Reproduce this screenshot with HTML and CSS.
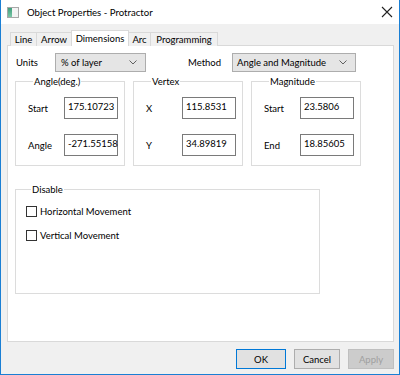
FILE: index.html
```html
<!DOCTYPE html>
<html>
<head>
<meta charset="utf-8">
<link rel="stylesheet" href="styles.css">
</head>
<body>
<div class="window">
  <div class="titlebar">
    <span class="appicon"><span class="appicon-side"></span></span>
    <span class="title">Object Properties - Protractor</span>
    <svg class="close" width="12" height="12" viewBox="0 0 12 12"><path d="M1 1 L11 11 M11 1 L1 11" stroke="#222" stroke-width="1.1" fill="none"/></svg>
  </div>
  <div class="client">
    <div class="tabs">
      <div class="tab t-line">Line</div>
      <div class="tab t-arrow">Arrow</div>
      <div class="tab active t-dim">Dimensions</div>
      <div class="tab t-arc">Arc</div>
      <div class="tab t-prog">Programming</div>
    </div>
    <div class="panel">
      <div class="toprow">
        <span class="units-lbl">Units</span>
        <div class="select units-sel"><span>% of layer</span><svg class="chev" width="8" height="5" viewBox="0 0 8 5"><path d="M0.5 0.5 L4 4 L7.5 0.5" stroke="#606060" fill="none"/></svg></div>
        <span class="method-lbl">Method</span>
        <div class="select method-sel"><span>Angle and Magnitude</span><svg class="chev" width="8" height="5" viewBox="0 0 8 5"><path d="M0.5 0.5 L4 4 L7.5 0.5" stroke="#606060" fill="none"/></svg></div>
      </div>
      <div class="groups">
        <fieldset class="group">
          <legend>Angle(deg.)</legend>
          <div class="field"><span class="flbl">Start</span><span class="input">175.10723</span></div>
          <div class="field"><span class="flbl">Angle</span><span class="input">-271.55158</span></div>
        </fieldset>
        <fieldset class="group">
          <legend>Vertex</legend>
          <div class="field"><span class="flbl">X</span><span class="input">115.8531</span></div>
          <div class="field"><span class="flbl">Y</span><span class="input">34.89819</span></div>
        </fieldset>
        <fieldset class="group">
          <legend>Magnitude</legend>
          <div class="field"><span class="flbl">Start</span><span class="input">23.5806</span></div>
          <div class="field"><span class="flbl">End</span><span class="input">18.85605</span></div>
        </fieldset>
      </div>
      <fieldset class="disable">
        <legend>Disable</legend>
        <label class="check"><span class="box"></span>Horizontal Movement</label>
        <label class="check"><span class="box"></span>Vertical Movement</label>
      </fieldset>
    </div>
    <div class="buttons">
      <div class="btn default">OK</div>
      <div class="btn">Cancel</div>
      <div class="btn disabled">Apply</div>
    </div>
  </div>
</div>
</body>
</html>
```
FILE: styles.css
```css
html, body {
  margin: 0;
  padding: 0;
}
body {
  font-family: Lato, "Noto Sans", sans-serif;
  font-size: 9.5px;
  color: #000;
}
.window {
  width: 400px;
  height: 375px;
  box-sizing: border-box;
  border: 1px solid #1a7fd4;
  border-top: none;
  display: flex;
  flex-direction: column;
  background: #f0f0f0;
}
.titlebar {
  height: 24px;
  background: #fff;
  display: flex;
  align-items: center;
  padding-left: 6px;
  flex: none;
}
.appicon {
  width: 10px;
  height: 9px;
  border: 1px solid #a8a8a8;
  background: #f4f4f4;
  display: flex;
  margin-top: 1px;
}
.appicon-side {
  width: 4px;
  height: 9px;
  background: linear-gradient(#3f9e7c, #7cc7a7);
}
.title {
  margin-left: 8px;
  font-size: 9.6px;
  flex: 1;
  padding-top: 1px;
  white-space: nowrap;
}
.close {
  margin-right: 6px;
}
.client {
  flex: 1;
  display: flex;
  flex-direction: column;
  padding: 0 5px 0 6px;
}
.tabs {
  display: flex;
  align-items: flex-end;
  height: 22px;
  padding-left: 3px;
  margin-bottom: -1px;
  position: relative;
  z-index: 1;
}
.tab {
  height: 13px;
  box-sizing: content-box;
  border: 1px solid #d9d9d9;
  border-bottom: none;
  border-right: none;
  line-height: 14px;
  background: #f0f0f0;
  white-space: nowrap;
  text-align: center;
}
.t-line { width: 25px; }
.t-arrow { width: 34px; }
.t-dim { width: 56px; }
.t-arc { width: 21px; }
.t-prog { width: 66px; border-right: 1px solid #d9d9d9; }
.tab.active {
  height: 15px;
  background: #fff;
  border-right: 1px solid #d9d9d9;
  line-height: 16px;
  position: relative;
}
.tab.active + .tab {
  border-left: none;
}
.panel {
  height: 297px;
  border: 1px solid #d9d9d9;
  background: #fff;
  box-sizing: border-box;
  padding: 6px 0 0 7px;
}
.toprow {
  display: flex;
  align-items: center;
  height: 20px;
}
.units-lbl {
  width: 39px;
  padding-left: 1px;
}
.method-lbl {
  margin-left: 42px;
  width: 44px;
}
.select {
  height: 19px;
  box-sizing: border-box;
  border: 1px solid #adadad;
  background: #e5e5e5;
  display: flex;
  align-items: center;
  justify-content: space-between;
  padding: 0 8px 0 5px;
  white-space: nowrap;
}
.units-sel {
  width: 91px;
}
.method-sel {
  width: 124px;
  padding-left: 4px;
}
.groups {
  display: flex;
  gap: 8px;
  margin-top: 3px;
}
fieldset {
  margin: 0;
  border: 1px solid #dcdcdc;
  min-width: 0;
}
legend {
  padding: 0 1px;
  margin-left: 5px;
  line-height: 13px;
}
.group {
  width: 110px;
  box-sizing: border-box;
  padding: 9px 0 9px 12px;
  display: flex;
  flex-direction: column;
  gap: 15px;
}
.field {
  display: flex;
  align-items: center;
  height: 22px;
}
.flbl {
  width: 36px;
}
.input {
  width: 54px;
  height: 22px;
  box-sizing: border-box;
  border: 1px solid #7a7a7a;
  padding: 3px 0 0 3px;
  background: #fff;
  white-space: nowrap;
}
.disable {
  width: 305px;
  height: 111px;
  box-sizing: border-box;
  margin-top: 17px;
  padding: 8px 0 0 10px;
  display: flex;
  flex-direction: column;
  gap: 10px;
}
.check {
  display: flex;
  align-items: center;
  height: 14px;
}
.box {
  width: 9px;
  height: 9px;
  border: 1px solid #333;
  background: #fff;
  margin-right: 3px;
}
.buttons {
  display: flex;
  justify-content: flex-end;
  gap: 8px;
  padding-top: 7px;
}
.btn {
  width: 46px;
  height: 20px;
  box-sizing: border-box;
  border: 1px solid #adadad;
  background: #e1e1e1;
  display: flex;
  align-items: center;
  justify-content: center;
}
.btn.default {
  width: 50px;
  border: 1px solid #0078d7;
}
.btn.disabled {
  color: #a0a0a0;
  background: #cccccc;
  border-color: #bfbfbf;
}
```
